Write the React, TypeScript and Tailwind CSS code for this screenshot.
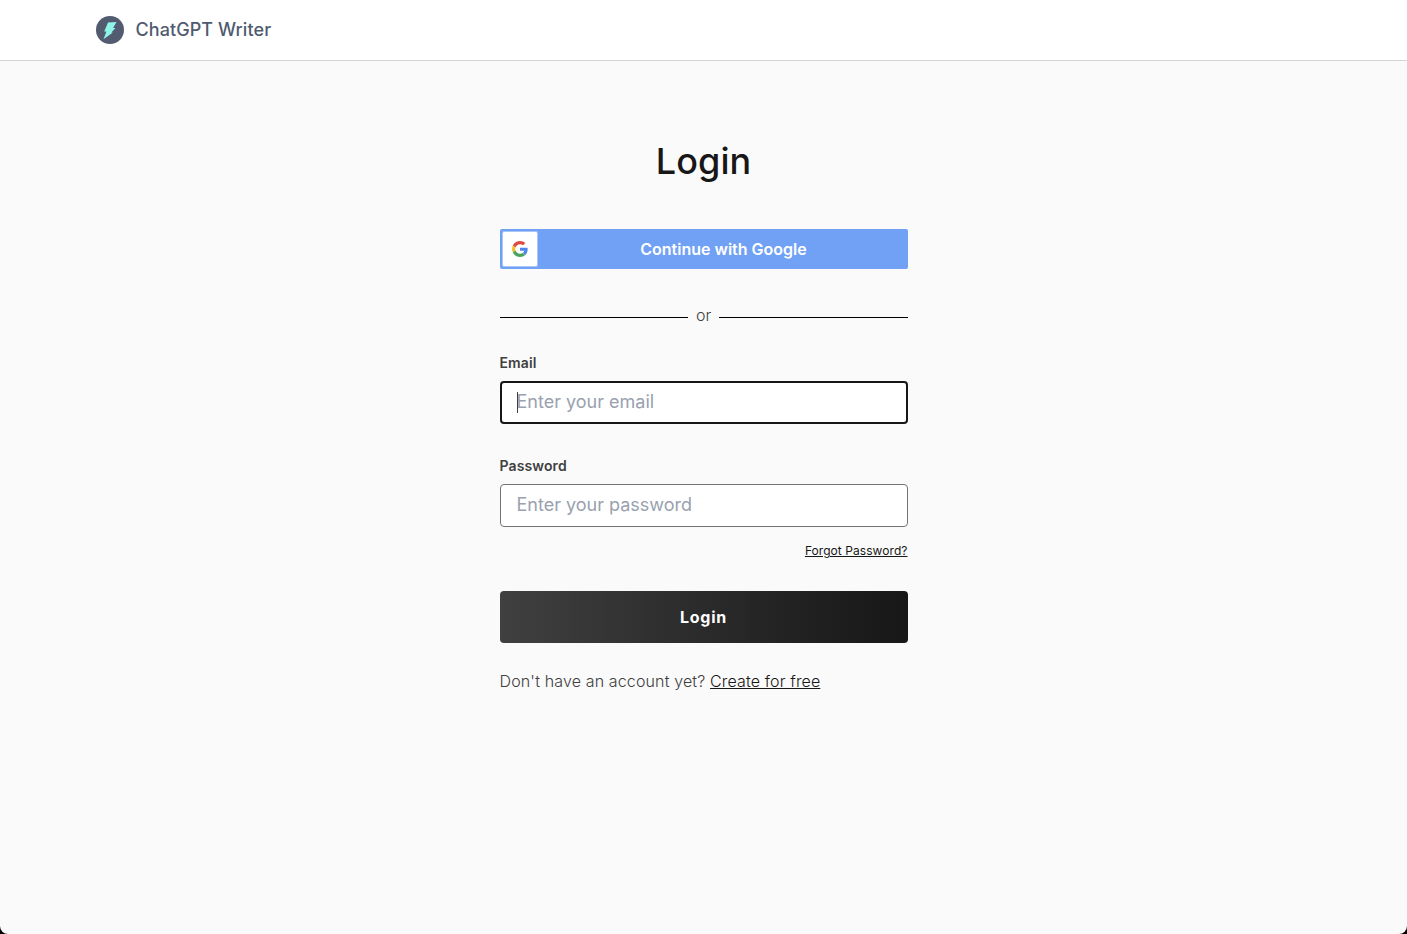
import React from 'react';

const BrandMark: React.FC = () => (
  <svg width="28" height="28" viewBox="0 0 28 28" className="shrink-0">
    <circle cx="14" cy="14" r="14" fill="#525b70" />
    <path d="M12 6.6L20.5 6l-3.4 5.9h2.4l-4.2 4.6h1.6L7.5 23.3l2.9-7.7H8.2z" fill="#8ff5ea" />
  </svg>
);

const GoogleLogo: React.FC = () => (
  <svg width="16" height="16" viewBox="0 0 48 48">
    <path fill="#dd4b3e" d="M24 9.5c3.54 0 6.71 1.22 9.21 3.6l6.85-6.85C35.9 2.38 30.47 0 24 0 14.62 0 6.51 5.38 2.56 13.22l7.98 6.19C12.43 13.72 17.74 9.5 24 9.5z" />
    <path fill="#4f86ec" d="M46.98 24.55c0-1.57-.15-3.09-.38-4.55H24v9.02h12.94c-.58 2.96-2.26 5.48-4.78 7.18l7.73 6c4.51-4.18 7.09-10.36 7.09-17.65z" />
    <path fill="#f4bf2e" d="M10.53 28.59c-.48-1.45-.76-2.99-.76-4.59s.27-3.14.76-4.59l-7.98-6.19C.92 16.46 0 20.12 0 24c0 3.88.92 7.54 2.56 10.78l7.97-6.19z" />
    <path fill="#4ba45c" d="M24 48c6.48 0 11.93-2.13 15.89-5.81l-7.73-6c-2.15 1.45-4.92 2.3-8.16 2.3-6.26 0-11.57-4.22-13.47-9.91l-7.98 6.19C6.51 42.62 14.62 48 24 48z" />
  </svg>
);

interface FieldProps {
  id: string;
  label: string;
  type: string;
  placeholder: string;
  active?: boolean;
}

const Field: React.FC<FieldProps> = ({ id, label, type, placeholder, active }) => (
  <div className="flex flex-col">
    <label htmlFor={id} className="mb-2 text-sm leading-5 font-semibold tracking-[0.12px] text-neutral-700">{label}</label>
    <div className="relative">
      <input
        id={id}
        type={type}
        placeholder={placeholder}
        className={`block h-[43px] w-full rounded bg-white pb-[2px] text-lg text-neutral-700 outline-none placeholder:text-gray-400 ${active ? 'border-2 border-neutral-900 px-[15px]' : 'border border-neutral-500 px-4'}`}
      />
      {/* Text cursor of the focused field */}
      {active && <span className="absolute top-[11px] left-[17px] h-[21px] w-px bg-neutral-700" />}
    </div>
  </div>
);

export default function App() {
  return (
    <div className="min-h-screen bg-black font-['Inter',sans-serif]">
      <div className="flex min-h-screen flex-col overflow-hidden rounded-b-lg bg-neutral-50">
        <header className="flex h-[61px] items-center border-b border-neutral-300 bg-white px-24">
          <a className="flex items-center gap-[11.5px]">
            <BrandMark />
            <span className="text-lg font-medium tracking-[0.08px] text-[#4f5b70]">ChatGPT Writer</span>
          </a>
        </header>

        <main className="mx-auto flex w-[408px] flex-col pt-20">
          <h1 className="text-center text-4xl leading-10 font-medium tracking-[0.1px] text-neutral-900">Login</h1>

          <button className="mt-12 flex h-10 items-center gap-[1.5px] rounded-xs bg-[#70a1f4] pl-[2.5px]">
            <span className="flex h-9 w-9 items-center justify-center rounded-xs border border-white/40 bg-white bg-clip-padding">
              <GoogleLogo />
            </span>
            <span className="flex-1 text-center text-base font-semibold text-white">Continue with Google</span>
          </button>

          <div className="mt-[34px] flex items-center gap-2 text-base font-light text-neutral-700">
            <span className="mt-1 h-px flex-1 bg-black" />
            <span>or</span>
            <span className="mt-1 h-px flex-1 bg-black" />
          </div>

          <form className="mt-[26px] flex flex-col">
            <Field id="email" label="Email" type="email" placeholder="Enter your email" active />
            <div className="mt-8">
              <Field id="password" label="Password" type="password" placeholder="Enter your password" />
            </div>
            <a className="mt-4 self-end text-xs tracking-[0.06px] text-neutral-900 underline">Forgot Password?</a>
            <button
              type="button"
              className="mt-8 h-[52px] rounded bg-linear-to-r from-[#404040] to-[#171717] text-base font-bold tracking-[0.7px] text-white"
            >
              Login
            </button>
          </form>

          <p className="mt-[26px] text-base font-light tracking-[0.14px] text-neutral-700">
            Don't have an account yet? <a className="text-neutral-900 underline">Create for free</a>
          </p>
        </main>
      </div>
    </div>
  );
}
